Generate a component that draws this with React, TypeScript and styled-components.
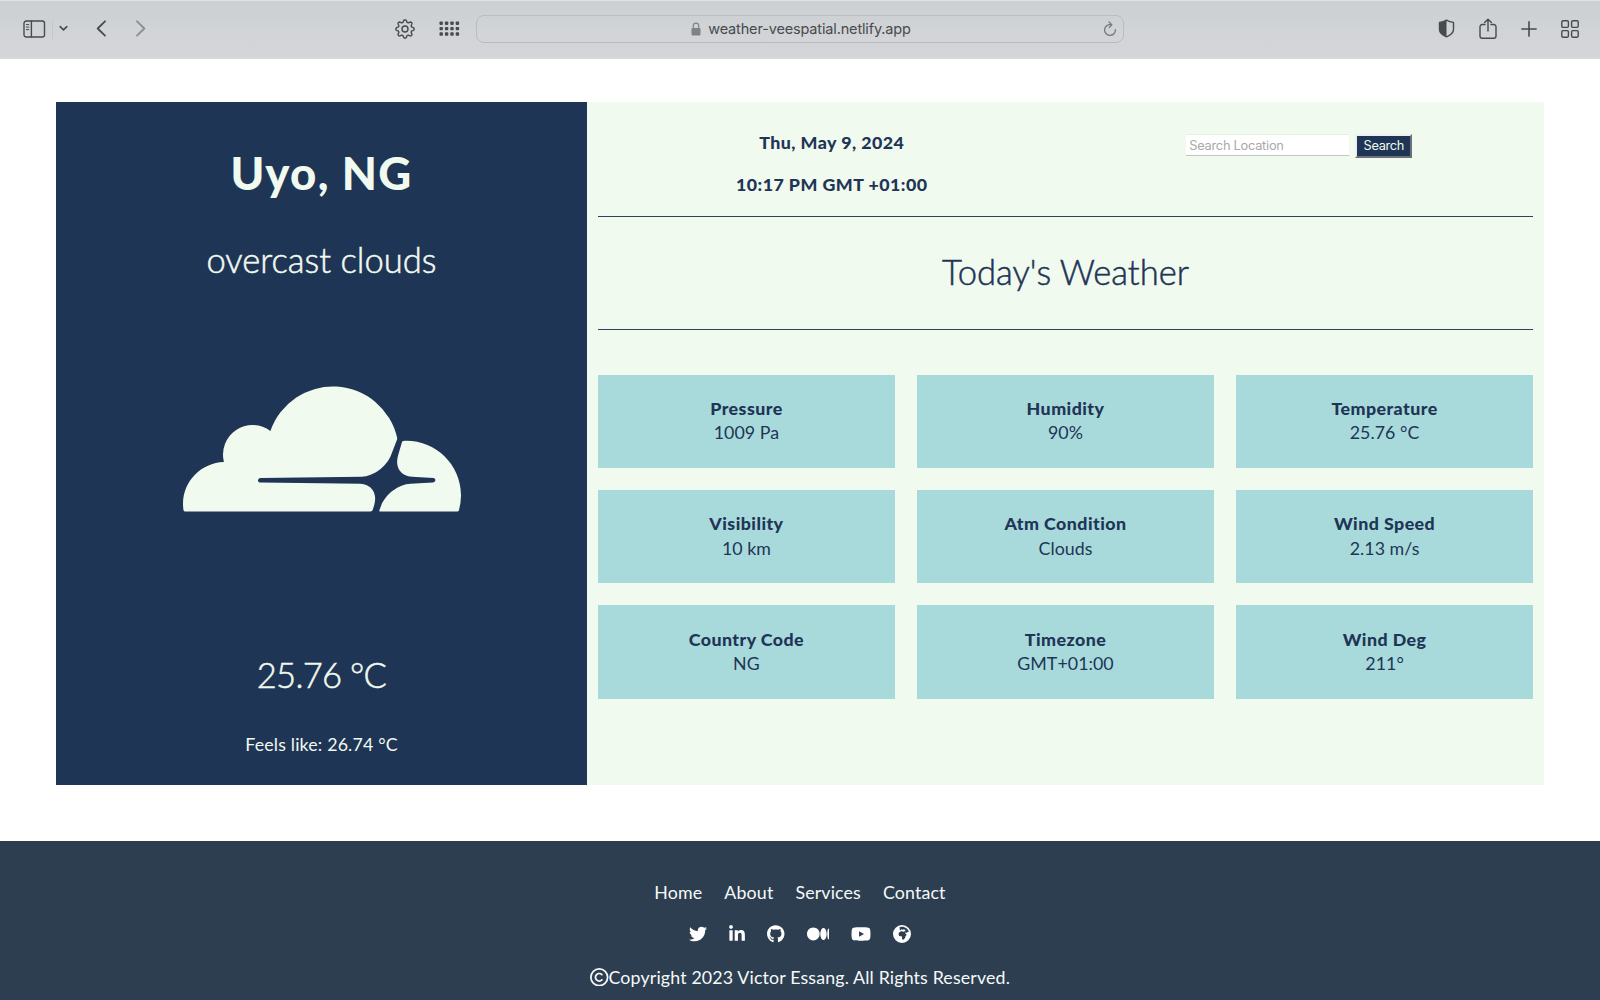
import React from 'react';
import styled, { createGlobalStyle } from 'styled-components';
import {
  FaTwitter,
  FaLinkedinIn,
  FaGithub,
  FaMedium,
  FaYoutube,
  FaEarthAfrica,
  FaRegCopyright,
  FaCloudflare,
} from 'react-icons/fa6';

const navy = '#1f3556';
const mint = '#f1faee';

const GlobalStyle = createGlobalStyle`
  *, *::before, *::after { box-sizing: border-box; }
  body {
    margin: 0;
    background: #fff;
    font-family: Lato, 'Liberation Sans', sans-serif;
    overflow: hidden;
  }
  h1, h2, h3, p { margin: 0; }
`;

const Page = styled.div`
  display: flex;
  flex-direction: column;
  height: 1000px;
`;

/* Browser toolbar */
const Toolbar = styled.header`
  display: flex;
  align-items: center;
  flex: none;
  height: 59px;
  padding: 0 21.5px 2px 23px;
  border-top: 1px solid #dfe3e6;
  border-bottom: 1px solid #d9dadc;
  background: linear-gradient(#cbd0d3, #d1d3d6 50%, #d5d6da);
  color: #484b4e;
`;

const Glyph = styled.svg<{ $gap?: number; $faded?: boolean }>`
  flex: none;
  display: block;
  margin-left: ${(p) => p.$gap ?? 0}px;
  fill: none;
  stroke: currentColor;
  stroke-width: 1.4;
  stroke-linecap: round;
  stroke-linejoin: round;
  opacity: ${(p) => (p.$faded ? 0.5 : 1)};
`;

const Divider = styled.span`
  width: 1px;
  height: 20px;
  margin: 0 6px;
  background: #c6c9cc;
`;

const AddressBar = styled.div`
  display: grid;
  grid-template-columns: 24px 1fr 24px;
  align-items: center;
  width: 648px;
  height: 28px;
  margin-left: 16px;
  border: 1px solid #b9bdc0;
  border-radius: 8px;
`;

const Address = styled.div`
  grid-column: 2;
  display: flex;
  align-items: center;
  justify-content: center;
  gap: 7px;
  padding-left: 2px;
  font: 400 14.5px/20px Inter, sans-serif;
  letter-spacing: -0.15px;
`;

const Spacer = styled.span`
  flex: 1;
`;

/* Weather panels */
const Main = styled.main`
  display: grid;
  grid-template-columns: 531px 957px;
  flex: none;
  height: 683px;
  margin: 43px 56px 56px;
`;

const Summary = styled.section`
  display: flex;
  flex-direction: column;
  align-items: center;
  padding-top: 43.5px;
  background: ${navy};
  color: ${mint};
`;

const City = styled.h1`
  font-size: 45.5px;
  font-weight: 900;
  line-height: 54px;
  letter-spacing: 1.3px;
`;

const Reading = styled.p<{ $top: number; $tracking: number }>`
  margin-top: ${(p) => p.$top}px;
  font-size: 34.6px;
  font-weight: 300;
  line-height: 42px;
  letter-spacing: ${(p) => p.$tracking}px;
  -webkit-text-stroke: 0.5px currentColor;
`;

const CloudIcon = styled(FaCloudflare)`
  width: 278px;
  height: 278px;
  margin: 35.5px 0 59px;
`;

const FeelsLike = styled.p`
  margin-top: 37px;
  font-size: 17.8px;
  line-height: 22px;
  letter-spacing: 0.17px;
`;

const Details = styled.section`
  padding: 0 11px;
  background: ${mint};
  color: ${navy};
`;

const DetailsHeader = styled.div`
  display: grid;
  grid-template-columns: 1fr 1fr;
  height: 115px;
  padding-top: 29px;
  border-bottom: 1px solid #2c4260;
`;

const Clock = styled.div`
  display: grid;
  gap: 20px;
  align-content: start;
  text-align: center;
  font-size: 17.8px;
  font-weight: 900;
  line-height: 22px;
  letter-spacing: 0.45px;
`;

const SearchForm = styled.form`
  display: flex;
  justify-content: center;
  align-items: flex-start;
  gap: 6px;
  padding-top: 3px;
`;

const SearchInput = styled.input`
  width: 163px;
  height: 22px;
  padding: 1px 3px 0;
  border: 0;
  border-top: 1px solid #e8eee7;
  border-bottom: 1px solid #c4c8c4;
  border-radius: 0;
  background: #fff;
  font: 400 12.8px Inter, sans-serif;
  letter-spacing: -0.25px;
  &::placeholder {
    color: #a9a9a9;
    opacity: 1;
  }
`;

const SearchButton = styled.button`
  width: 57px;
  height: 24px;
  padding: 0;
  border: 2px solid;
  border-color: #eceff0 #6d7078 #6d7078 #eceff0;
  background: ${navy};
  color: ${mint};
  font: 400 12.8px/20px Inter, sans-serif;
  letter-spacing: -0.35px;
`;

const SectionTitle = styled.h2`
  height: 113px;
  padding-top: 34px;
  border-bottom: 1px solid #2c4260;
  text-align: center;
  font-size: 34.6px;
  font-weight: 300;
  line-height: 42px;
  -webkit-text-stroke: 0.5px currentColor;
`;

const CardGrid = styled.div`
  display: grid;
  grid-template-columns: repeat(3, 1fr);
  grid-auto-rows: 93.3px;
  gap: 22.2px;
  margin-top: 44.5px;
`;

const Card = styled.article`
  padding-top: 21.4px;
  background: #a8dadb;
  text-align: center;
  font-size: 17.8px;
  line-height: 24.4px;
`;

const CardTitle = styled.h3`
  font-size: inherit;
  font-weight: 900;
  letter-spacing: 0.45px;
`;

const CardValue = styled.p`
  letter-spacing: 0.05px;
`;

/* Footer */
const Footer = styled.footer`
  display: flex;
  flex-direction: column;
  align-items: center;
  flex: 1;
  padding-top: 40px;
  background: #2d3e50;
  color: #f6f9fa;
  font-size: 17.8px;
  line-height: 22px;
  letter-spacing: 0.15px;
`;

const FooterNav = styled.nav`
  display: flex;
  gap: 22px;
`;

const FooterLink = styled.a`
  color: inherit;
  text-decoration: none;
`;

const Socials = styled.div`
  display: flex;
  align-items: center;
  gap: 22px;
  height: 18px;
  margin-top: 22px;
`;

const SocialIcon = styled.span<{ $width: number }>`
  display: flex;
  color: #fff;
  svg {
    width: ${(p) => p.$width}px;
    height: 18px;
  }
`;

const Copyright = styled.p`
  display: flex;
  align-items: center;
  margin-top: 23px;
  svg {
    width: 18.5px;
    height: 18.5px;
  }
`;

const cards = [
  ['Pressure', '1009 Pa'],
  ['Humidity', '90%'],
  ['Temperature', '25.76 °C'],
  ['Visibility', '10 km'],
  ['Atm Condition', 'Clouds'],
  ['Wind Speed', '2.13 m/s'],
  ['Country Code', 'NG'],
  ['Timezone', 'GMT+01:00'],
  ['Wind Deg', '211°'],
];

const socials = [
  { Icon: FaTwitter, width: 18 },
  { Icon: FaLinkedinIn, width: 16 },
  { Icon: FaGithub, width: 17.5 },
  { Icon: FaMedium, width: 22.5 },
  { Icon: FaYoutube, width: 20 },
  { Icon: FaEarthAfrica, width: 18 },
];

/* Closed cog outline: eight rounded teeth around the centre (10, 10). */
function cogPath() {
  const points: string[] = [];
  for (let i = 0; i <= 96; i++) {
    const a = (i / 96) * Math.PI * 2;
    const wave = Math.cos(a * 8);
    const r = 8 + 1.15 * Math.sign(wave) * Math.pow(Math.abs(wave), 0.5);
    points.push(`${(10 + r * Math.sin(a)).toFixed(2)} ${(10 - r * Math.cos(a)).toFixed(2)}`);
  }
  return `M${points.join('L')}Z`;
}

function BrowserToolbar() {
  return (
    <Toolbar>
      <Glyph width="23" height="18" viewBox="0 0 23 18">
        <rect x="1" y="1" width="20.5" height="16" rx="2.2" />
        <path d="M8.4 1v16" />
        <path d="M3.4 4.6h2.4M3.4 7.1h2.4M3.4 9.6h2.4" strokeWidth="1" />
      </Glyph>
      <Divider />
      <Glyph width="9" height="7" viewBox="0 0 9 7">
        <path d="M1.2 1.6 4.5 4.9 7.8 1.6" strokeWidth="1.6" />
      </Glyph>
      <Glyph $gap={28} width="11" height="17" viewBox="0 0 11 17">
        <path d="M9 1.3 1.7 8.5 9 15.7" strokeWidth="1.8" />
      </Glyph>
      <Glyph $gap={28} $faded width="11" height="17" viewBox="0 0 11 17">
        <path d="M2 1.3 9.3 8.5 2 15.7" strokeWidth="1.8" />
      </Glyph>
      <Glyph $gap={249} width="20" height="20" viewBox="0 0 20 20">
        <path d={cogPath()} />
        <circle cx="10" cy="10" r="3" />
      </Glyph>
      <Glyph $gap={24} width="21" height="15" viewBox="0 0 21 15">
        {[0, 1, 2].map((row) =>
          [0, 1, 2, 3].map((col) => (
            <rect
              key={`${row}-${col}`}
              x={0.5 + col * 5.4}
              y={0.5 + row * 5.4}
              width="3.4"
              height="3.4"
              rx="0.8"
              fill="currentColor"
              stroke="none"
            />
          )),
        )}
      </Glyph>
      <AddressBar>
        <Address>
          <Glyph width="10" height="14" viewBox="0 0 10 14" color="#808386">
            <rect x="0.5" y="6" width="9" height="7.5" rx="1.2" fill="currentColor" stroke="none" />
            <path d="M2.3 6.5V3.8a2.7 2.7 0 0 1 5.4 0v2.7" strokeWidth="1.2" />
          </Glyph>
          weather-veespatial.netlify.app
        </Address>
        <Glyph $gap={4} width="14" height="16" viewBox="0 0 14 16" color="#75787b">
          <path d="M8.2 3.7A5.4 5.4 0 1 0 12.4 8.6M6 .9 8.8 3.7 6.2 6.6" strokeWidth="1.3" />
        </Glyph>
      </AddressBar>
      <Spacer />
      <Glyph width="17" height="19" viewBox="0 0 17 19">
        <path d="M8.5 1.2c2 1.3 4.3 2 7 2.2v7.2c0 3.3-3 5.6-7 7.3-4-1.7-7-4-7-7.3V3.4c2.7-.2 5-.9 7-2.2z" />
        <path
          d="M8.5 1.2v16.7c-4-1.7-7-4-7-7.3V3.4c2.7-.2 5-.9 7-2.2z"
          fill="currentColor"
          stroke="none"
        />
      </Glyph>
      <Glyph $gap={24.5} width="18" height="22" viewBox="0 0 18 22">
        <path d="M6 6.5H3.2A2.2 2.2 0 0 0 1 8.7V18a2.2 2.2 0 0 0 2.2 2.2h11.6A2.2 2.2 0 0 0 17 18V8.7a2.2 2.2 0 0 0-2.2-2.2H12" />
        <path d="M9 13V1.2M5.6 4.5 9 1.2l3.4 3.3" />
      </Glyph>
      <Glyph $gap={23.5} width="16" height="16" viewBox="0 0 16 16">
        <path d="M8 .9v14.2M.9 8h14.2" strokeWidth="1.6" />
      </Glyph>
      <Glyph $gap={24} width="18" height="18" viewBox="0 0 18 18">
        <rect x="0.8" y="0.8" width="6.6" height="6.6" rx="1.1" />
        <rect x="10.6" y="0.8" width="6.6" height="6.6" rx="1.1" />
        <rect x="0.8" y="10.6" width="6.6" height="6.6" rx="1.1" />
        <rect x="10.6" y="10.6" width="6.6" height="6.6" rx="1.1" />
      </Glyph>
    </Toolbar>
  );
}

export default function App() {
  return (
    <Page>
      <GlobalStyle />
      <BrowserToolbar />
      <Main>
        <Summary>
          <City>Uyo, NG</City>
          <Reading $top={39.5} $tracking={0}>
            overcast clouds
          </Reading>
          <CloudIcon />
          <Reading $top={0} $tracking={-0.75}>
            25.76 °C
          </Reading>
          <FeelsLike>Feels like: 26.74 °C</FeelsLike>
        </Summary>
        <Details>
          <DetailsHeader>
            <Clock>
              <span>Thu, May 9, 2024</span>
              <span>10:17 PM GMT +01:00</span>
            </Clock>
            <SearchForm onSubmit={(e) => e.preventDefault()}>
              <SearchInput placeholder="Search Location" />
              <SearchButton type="submit">Search</SearchButton>
            </SearchForm>
          </DetailsHeader>
          <SectionTitle>Today's Weather</SectionTitle>
          <CardGrid>
            {cards.map(([title, value]) => (
              <Card key={title}>
                <CardTitle>{title}</CardTitle>
                <CardValue>{value}</CardValue>
              </Card>
            ))}
          </CardGrid>
        </Details>
      </Main>
      <Footer>
        <FooterNav>
          {['Home', 'About', 'Services', 'Contact'].map((label) => (
            <FooterLink key={label}>{label}</FooterLink>
          ))}
        </FooterNav>
        <Socials>
          {socials.map(({ Icon, width }, i) => (
            <SocialIcon key={i} $width={width}>
              <Icon />
            </SocialIcon>
          ))}
        </Socials>
        <Copyright>
          <FaRegCopyright />
          <span>Copyright 2023 Victor Essang. All Rights Reserved.</span>
        </Copyright>
      </Footer>
    </Page>
  );
}
